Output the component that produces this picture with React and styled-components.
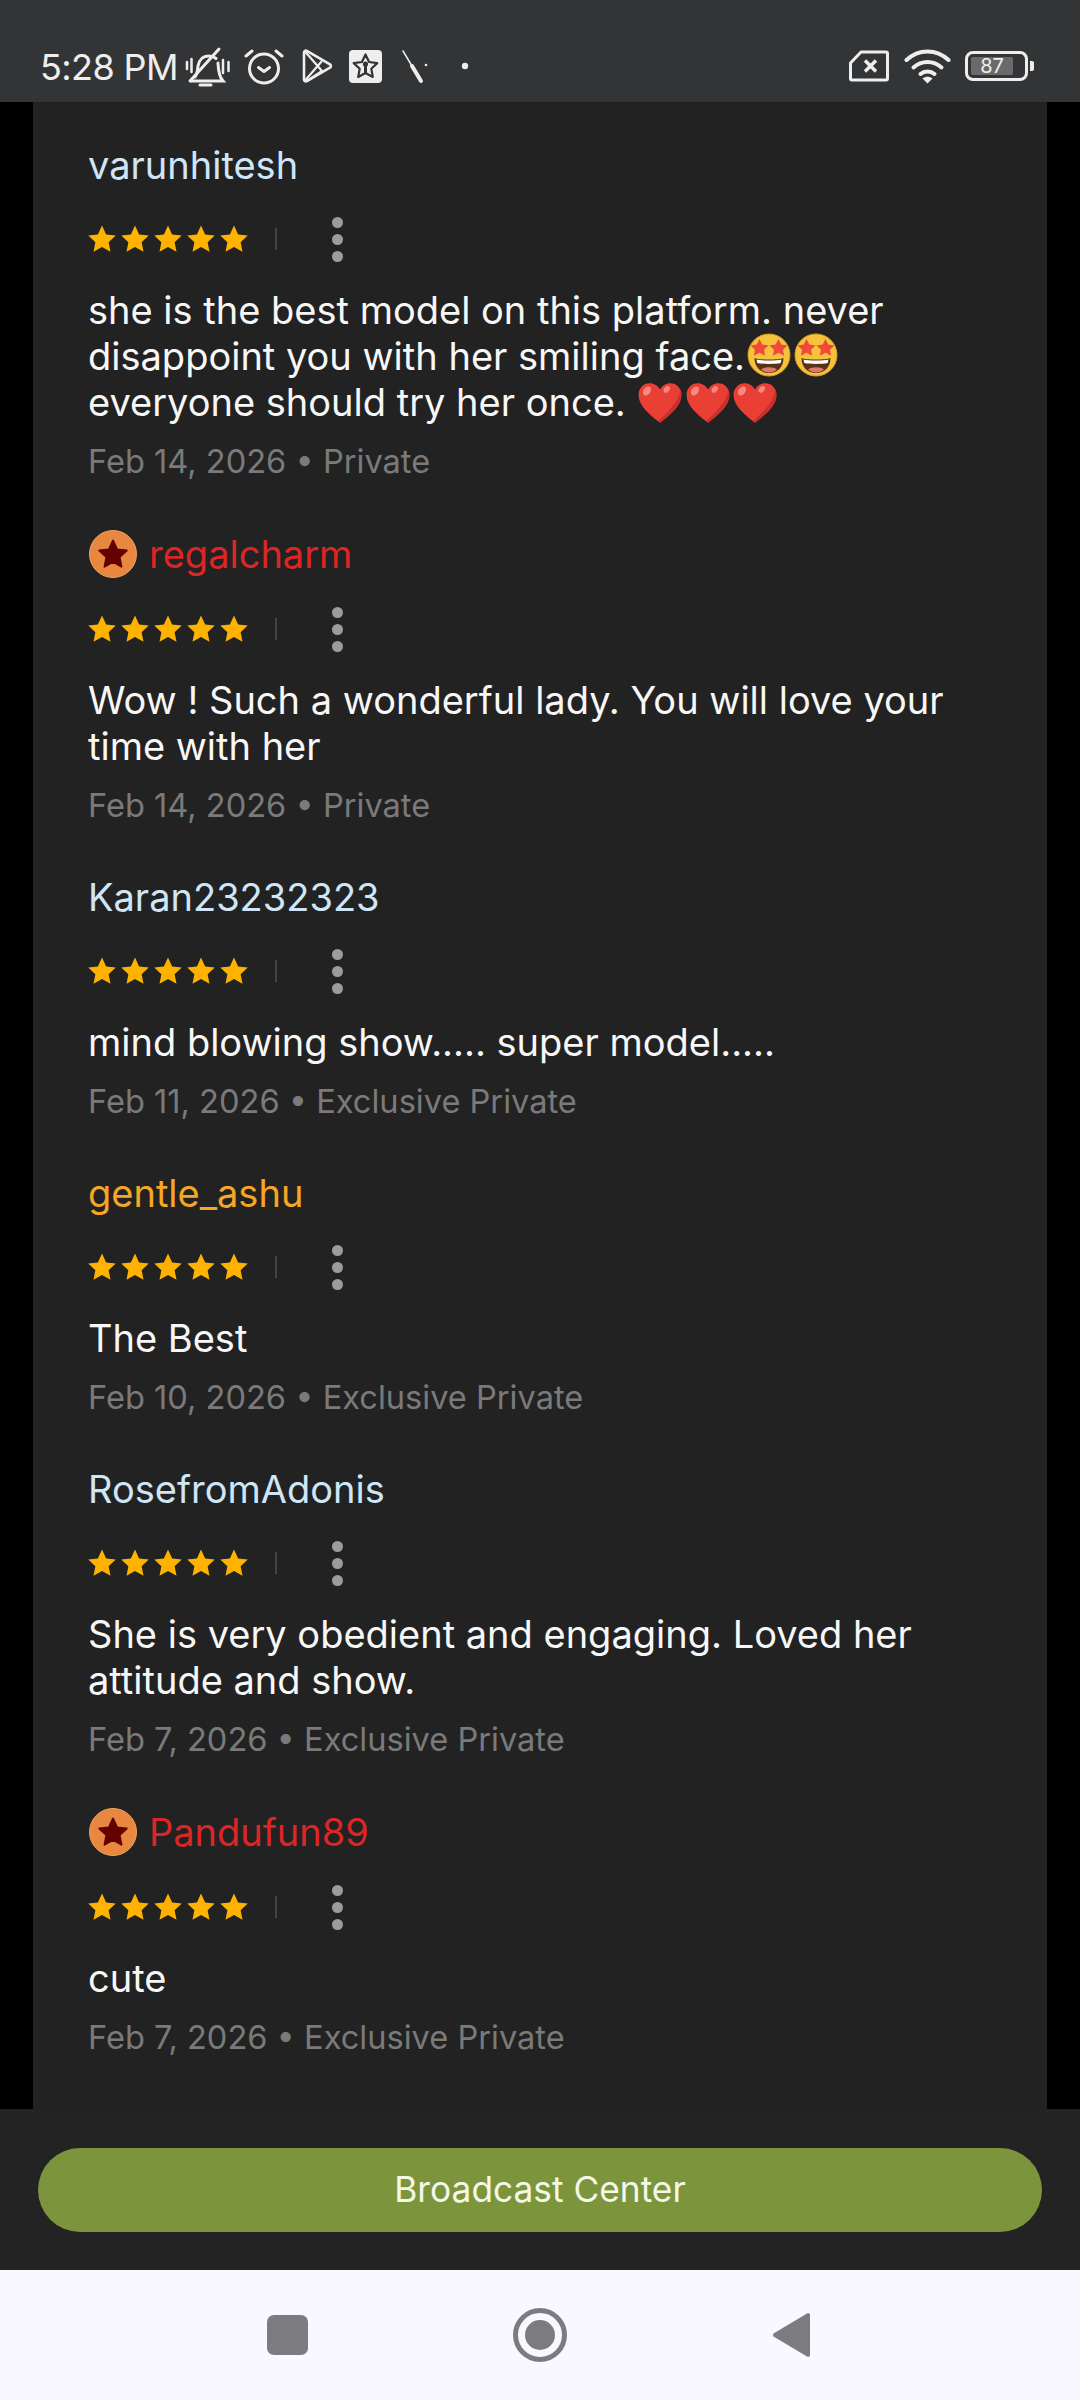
import React from "react";
import styled, { createGlobalStyle } from "styled-components";

const GlobalStyle = createGlobalStyle`
  html, body { margin: 0; padding: 0; background: #000; }
  body { font-family: Inter, "Noto Sans", sans-serif; }
`;

const Screen = styled.div`
  width: 1080px;
  height: 2400px;
  display: flex;
  flex-direction: column;
  overflow: hidden;
  background: #000;
`;

const StatusBar = styled.div`
  height: 102px;
  flex: none;
  display: flex;
  align-items: flex-start;
  justify-content: space-between;
  padding: 47px 46px 0 40px;
  box-sizing: border-box;
  background: #333436;
  color: #eeeeee;
`;

const StatusGroup = styled.div`
  display: flex;
  align-items: center;
  height: 38px;
`;

const Clock = styled.span`
  font-size: 36px;
  line-height: 38px;
  font-weight: 400;
  letter-spacing: -0.6px;
  margin-right: 7px;
  padding-top: 2px;
  white-space: nowrap;
`;

const StatusIcon = styled.svg`
  display: block;
  flex: none;
  margin-left: ${(p) => p.$gap || 0}px;
`;

const BatteryBox = styled.div`
  position: relative;
  width: 63px;
  height: 30px;
  box-sizing: border-box;
  margin-left: 14px;
  border: 3px solid #eeeeee;
  border-radius: 8px;
  padding: 3px;
  display: flex;
`;

const BatteryFill = styled.div`
  flex: 1;
  margin-right: 9px;
  background: #6a6a6c;
  border-radius: 2px;
  display: flex;
  align-items: center;
  justify-content: center;
  font-size: 20px;
  line-height: 18px;
  color: #eeeeee;
`;

const BatteryNub = styled.div`
  width: 4px;
  height: 10px;
  margin-left: 2px;
  background: #eeeeee;
  border-radius: 0 2px 2px 0;
`;

const Panel = styled.div`
  flex: 1;
  min-height: 0;
  margin: 0 33px;
  padding: 40px 70px 0 55px;
  background: #222222;
`;

const Review = styled.div`
  margin-bottom: 49px;
`;

const NameRow = styled.div`
  min-height: 46px;
  display: flex;
  align-items: center;
  gap: 12px;
`;

const Name = styled.span`
  font-size: 38px;
  line-height: 46px;
  color: ${(p) => p.$color};
`;

const Badge = styled.div`
  width: 48px;
  height: 48px;
  margin-left: 1px;
  flex: none;
  box-sizing: border-box;
  border-radius: 50%;
  background: #e8873f;
  border: 1px solid #f0a060;
  display: flex;
  align-items: center;
  justify-content: center;
`;

const RatingRow = styled.div`
  height: 40px;
  margin-top: 31px;
  display: flex;
  align-items: center;
`;

const Stars = styled.div`
  display: flex;
  gap: 3px;
  width: 188px;
  margin-left: -1px;
`;

const Divider = styled.div`
  width: 2px;
  height: 22px;
  background: #444444;
`;

const MoreButton = styled.div`
  margin-left: 55px;
  display: flex;
  flex-direction: column;
  gap: 6px;
`;

const Dot = styled.div`
  width: 11px;
  height: 11px;
  border-radius: 50%;
  background: #9c9c9c;
`;

const Body = styled.div`
  margin-top: 28px;
  font-size: 38px;
  line-height: 46px;
  color: #f7f7f7;
`;

const Emoji = styled.svg`
  display: inline-block;
  width: ${(p) => p.$size}px;
  height: ${(p) => p.$size}px;
  margin: -4px ${(p) => p.$space}px;
  vertical-align: ${(p) => p.$drop}px;
`;

const Meta = styled.div`
  margin-top: 16px;
  font-size: 32.6px;
  line-height: 40px;
  color: #7a7a7a;
`;

const Footer = styled.div`
  height: 161px;
  flex: none;
  box-sizing: border-box;
  padding: 39px 38px 0;
  background: #232323;
`;

const BroadcastButton = styled.div`
  height: 84px;
  border-radius: 42px;
  background: #7c953c;
  color: #f4f8e6;
  font-size: 35.3px;
  display: flex;
  align-items: center;
  justify-content: center;
  padding-bottom: 2px;
  box-sizing: border-box;
`;

const NavBar = styled.div`
  height: 130px;
  flex: none;
  box-sizing: border-box;
  padding-right: 4px;
  background: #f8f8fe;
  display: flex;
  align-items: center;
  justify-content: center;
  gap: 205px;
`;

const NavSquare = styled.div`
  width: 41px;
  height: 40px;
  border-radius: 7px;
  background: #7c7c80;
`;

const NavIcon = styled.svg`
  display: block;
  flex: none;
`;

const STAR = "M12 1.2l3.3 7.1 7.7.9-5.7 5.3 1.5 7.7L12 18.4l-6.8 3.8 1.5-7.7L1 9.2l7.7-.9z";

const reviews = [
  {
    name: "varunhitesh",
    color: "#cfe6f8",
    body: (
      <>
        she is the best model on this platform. never disappoint you with her smiling face.
        <StarEyes />
        <StarEyes />
        {" "}everyone should try her once. <Heart />
        <Heart />
        <Heart />
      </>
    ),
    meta: "Feb 14, 2026 • Private",
  },
  {
    name: "regalcharm",
    color: "#dc2626",
    badge: true,
    body: "Wow ! Such a wonderful lady. You will love your time with her",
    meta: "Feb 14, 2026 • Private",
  },
  {
    name: "Karan23232323",
    color: "#cfe6f8",
    body: "mind blowing show..... super model.....",
    meta: "Feb 11, 2026 • Exclusive Private",
  },
  {
    name: "gentle_ashu",
    color: "#f5a623",
    body: "The Best",
    meta: "Feb 10, 2026 • Exclusive Private",
  },
  {
    name: "RosefromAdonis",
    color: "#cfe6f8",
    body: "She is very obedient and engaging. Loved her attitude and show.",
    meta: "Feb 7, 2026 • Exclusive Private",
  },
  {
    name: "Pandufun89",
    color: "#dc2626",
    badge: true,
    body: "cute",
    meta: "Feb 7, 2026 • Exclusive Private",
  },
];

function StarEyes() {
  return (
    <Emoji $size={44} $space={1.5} $drop={-3} viewBox="0 0 44 44" role="img" aria-label="🤩">
      <circle cx="22" cy="22" r="21" fill="#f5c33b" />
      <circle cx="22" cy="22" r="21" fill="none" stroke="#d99a20" strokeWidth="1" />
      <path d="M12.5 6l2.8 5.6 6.2.8-4.5 4.3 1.1 6.1-5.6-3-5.6 3 1.1-6.1L3.5 12.4l6.2-.8z" fill="#ef4a3c" />
      <path d="M31.5 6l2.8 5.6 6.2.8-4.5 4.3 1.1 6.1-5.6-3-5.6 3 1.1-6.1-4.5-4.3 6.2-.8z" fill="#ef4a3c" />
      <path d="M7.5 25c4.5 2 24.5 2 29 0 0 9-6 15-14.5 15S7.5 34 7.5 25z" fill="#5a3218" />
      <path d="M9.5 26.5c5 1.3 20 1.3 25 0l-.8 3.5c-6 1.2-17.400 1.2-23.400 0z" fill="#fff" />
      <path d="M14 36.500c3.500-3 12.500-3 16 0-2.300 2-5 3-8 3s-5.700-1-8-3z" fill="#e0786c" />
    </Emoji>
  );
}

function Heart() {
  return (
    <Emoji $size={46} $space={0.7} $drop={-6} viewBox="0 0 44 44" role="img" aria-label="❤️">
      <path d="M22 41C11 32 1.500 24.500 1.500 14 1.500 7.500 6.500 3 12 3c4.500 0 8 2.300 10 6 2-3.700 5.500-6 10-6 5.500 0 10.500 4.500 10.500 11C42.500 24.500 33 32 22 41z" fill="#ea3f35" />
      <path d="M22 41c11-9 20.500-16.500 20.500-27 0-2-.5-3.800-1.300-5.400C41 20 31 29 20.300 39.600z" fill="#c9302a" />
      <ellipse cx="9.500" cy="10.500" rx="3.300" ry="4.800" transform="rotate(35 9.500 10.500)" fill="#f78a80" />
      <ellipse cx="28.500" cy="9" rx="2.500" ry="3.600" transform="rotate(40 28.500 9)" fill="#f78a80" />
    </Emoji>
  );
}

function StarIcon() {
  return (
    <svg width="30" height="30" viewBox="0 0 24 24" style={{ display: "block" }}>
      <path d={STAR} fill="#ffb300" />
    </svg>
  );
}

function ReviewItem({ review }) {
  return (
    <Review>
      <NameRow>
        {review.badge && (
          <Badge>
            <svg width="30" height="30" viewBox="0 0 24 24">
              <path d={STAR} fill="#640000" stroke="#640000" strokeWidth="1.500" strokeLinejoin="round" />
            </svg>
          </Badge>
        )}
        <Name $color={review.color}>{review.name}</Name>
      </NameRow>
      <RatingRow>
        <Stars>
          {[0, 1, 2, 3, 4].map((i) => (
            <StarIcon key={i} />
          ))}
        </Stars>
        <Divider />
        <MoreButton>
          <Dot />
          <Dot />
          <Dot />
        </MoreButton>
      </RatingRow>
      <Body>{review.body}</Body>
      <Meta>{review.meta}</Meta>
    </Review>
  );
}

export default function App() {
  return (
    <Screen>
      <GlobalStyle />
      <StatusBar>
        <StatusGroup>
          <Clock>5:28 PM</Clock>
          {/* muted bell */}
          <StatusIcon width="46" height="42" viewBox="0 0 46 42" fill="none" stroke="#eee" strokeWidth="3" strokeLinecap="round">
            <path d="M2 17v7M6.500 14v13M38 15v13M43.500 17v9" strokeWidth="2.500" />
            <path d="M10 32c2.500-3 2.500-7 3-11 .8-6 5-10 11-10 2.500 0 5 .8 7 2.500M33 18c.3 6 .5 13 5 18H6" />
            <path d="M15 40h11" strokeWidth="3" />
            <path d="M5 36L34 4" />
          </StatusIcon>
          {/* alarm */}
          <StatusIcon $gap={13} width="40" height="38" viewBox="0 0 40 38" fill="none" stroke="#eee" strokeWidth="3" strokeLinecap="round" strokeLinejoin="round">
            <circle cx="20" cy="21.500" r="14.500" />
            <path d="M14.500 20.500l5.500 4 5.500-4" />
            <path d="M2 9l6-5M38 9l-6-5" />
          </StatusIcon>
          {/* play store */}
          <StatusIcon $gap={18} width="31" height="34" viewBox="0 0 31 34" fill="none" stroke="#eee" strokeWidth="2.600" strokeLinejoin="round">
            <path d="M2 3.500c0-1.500 1.500-2.300 2.800-1.600L28 15.300c1.300.8 1.300 2.600 0 3.400L4.800 32.100C3.500 32.800 2 32 2 30.500z" />
            <path d="M3 2.500L20 22 5 32M3 31.500L20 12" strokeWidth="2.200" />
          </StatusIcon>
          {/* app badge */}
          <StatusIcon $gap={16} width="33" height="33" viewBox="0 0 33 33">
            <rect width="33" height="33" rx="4" fill="#eee" />
            <path d="M16.500 4.500l3.600 7.500 8.200 1.100-6 5.700 1.500 8.200-7.300-4-7.300 4 1.500-8.200-6-5.700 8.200-1.100z" fill="none" stroke="#333436" strokeWidth="2.200" strokeLinejoin="round" />
            <circle cx="16.500" cy="14" r="2.600" fill="#333436" />
            <rect x="15" y="15.500" width="3" height="8.500" fill="#333436" />
          </StatusIcon>
          {/* stroke and dots */}
          <StatusIcon $gap={19} width="28" height="36" viewBox="0 0 28 36" fill="none" stroke="#eee" strokeLinecap="round">
            <path d="M2 3l9 15" strokeWidth="1.500" />
            <path d="M11 18l9 15" strokeWidth="4" />
            <circle cx="25" cy="17" r="1.300" fill="#eee" stroke="none" />
          </StatusIcon>
          <StatusIcon $gap={32} width="8" height="8" viewBox="0 0 8 8">
            <circle cx="4" cy="4" r="3.200" fill="#eee" />
          </StatusIcon>
        </StatusGroup>
        <StatusGroup>
          {/* sim missing */}
          <StatusIcon width="40" height="32" viewBox="0 0 40 32" fill="none" stroke="#eee" strokeWidth="3" strokeLinejoin="round">
            <path d="M12 2h25a1.500 1.500 0 0 1 1.500 1.500v25a1.500 1.500 0 0 1-1.500 1.500H3a1.500 1.500 0 0 1-1.500-1.500V13z" />
            <path d="M16 10.500l11 11M27 10.500l-11 11" strokeWidth="3.500" />
          </StatusIcon>
          {/* wifi */}
          <StatusIcon $gap={15} width="47" height="35" viewBox="0 0 47 35" fill="none" stroke="#eee" strokeWidth="4" strokeLinecap="round">
            <path d="M2.500 11c12-11.500 30-11.500 42 0" />
            <path d="M9.500 18.500c8-7.500 20-7.500 28 0" />
            <path d="M16.500 25c4-3.500 10-3.500 14 0" />
            <path d="M23.500 34.500l-5-5c3-2.400 7-2.400 10 0z" fill="#eee" stroke="none" />
          </StatusIcon>
          <BatteryBox>
            <BatteryFill>87</BatteryFill>
          </BatteryBox>
          <BatteryNub />
        </StatusGroup>
      </StatusBar>
      <Panel>
        {reviews.map((review) => (
          <ReviewItem key={review.name} review={review} />
        ))}
      </Panel>
      <Footer>
        <BroadcastButton>Broadcast Center</BroadcastButton>
      </Footer>
      <NavBar>
        <NavSquare />
        <NavIcon width="54" height="54" viewBox="0 0 54 54">
          <circle cx="27" cy="27" r="24.500" fill="none" stroke="#7c7c80" strokeWidth="5" />
          <circle cx="27" cy="27" r="15" fill="#7c7c80" />
        </NavIcon>
        <NavIcon width="38" height="46" viewBox="0 0 38 46">
          <path d="M35 1.500L1.500 21.500a2.500 2.500 0 0 0 0 3L35 44.500c1.500.8 3 .2 3-1.500V3c0-1.700-1.500-2.300-3-1.500z" fill="#7c7c80" />
        </NavIcon>
      </NavBar>
    </Screen>
  );
}
